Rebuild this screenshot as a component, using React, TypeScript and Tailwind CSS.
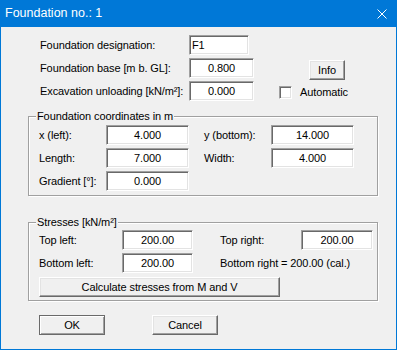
import React from "react";

const font = { fontFamily: '"Liberation Sans", Arial, sans-serif' };

function Field({ value, w, align = "center" }: { value: string; w: string; align?: "center" | "left" }) {
  return (
    <div
      className={`${w} h-[20px] bg-white border border-t-[#a0a0a0] border-l-[#a0a0a0] border-r-white border-b-white shadow-[inset_1px_1px_0_#696969,inset_-1px_-1px_0_#e3e3e3] flex items-center ${
        align === "center" ? "justify-center" : "justify-start pl-[2px]"
      } text-[11px] leading-none text-black`}
    >
      {value}
    </div>
  );
}

function Btn({ label, w, def = false }: { label: string; w: string; def?: boolean }) {
  return (
    <div
      className={`${w} h-[20px] flex items-center justify-center text-[11px] leading-none text-black ${
        def
          ? "border border-[#6a6a6a] shadow-[inset_1px_1px_0_#fff,inset_-1px_-1px_0_#a0a0a0]"
          : "border border-t-white border-l-white border-r-[#696969] border-b-[#696969] shadow-[inset_-1px_-1px_0_#a0a0a0,inset_1px_1px_0_#e3e3e3]"
      }`}
    >
      {label}
    </div>
  );
}

function Group({ title, children, className }: { title: string; children: React.ReactNode; className?: string }) {
  return (
    <div
      className={`w-[350px] border border-[#a0a0a0] shadow-[inset_1px_1px_0_#fff,1px_1px_0_#fff] flex flex-col ${className ?? ""}`}
    >
      <span className="-mt-[7px] ml-[7px] px-[1px] w-fit bg-[#f0f0f0] text-[11px] leading-[13px] text-black">{title}</span>
      {children}
    </div>
  );
}

export default function App() {
  return (
    <div
      className="w-[397px] h-[350px] bg-[#f0f0f0] border-x border-b border-[#0078d7] flex flex-col text-black"
      style={font}
    >
      <div className="h-[27px] shrink-0 bg-[#0078d7] flex items-center justify-between pl-[4px] pr-[9px]">
        <span className="text-white text-[12.5px] leading-none">Foundation no.: 1</span>
        <svg width="10" height="10" viewBox="0 0 10 10" className="block">
          <path d="M0.5 0.5 L9.5 9.5 M9.5 0.5 L0.5 9.5" stroke="#fff" strokeWidth="1" />
        </svg>
      </div>

      <div className="flex flex-col pl-[27px] pt-[8px] text-[11px] leading-[13px] tracking-[-0.1px]">
        {/* Top section */}
        <div className="flex pl-[12px]">
          <div className="grid grid-cols-[149px_auto] gap-y-[3px] items-center">
            <span>Foundation designation:</span>
            <Field value="F1" w="w-[60px]" align="left" />
            <span>Foundation base [m b. GL]:</span>
            <Field value="0.800" w="w-[65px]" />
            <span>Excavation unloading [kN/m²]:</span>
            <Field value="0.000" w="w-[65px]" />
          </div>
          <div className="flex flex-col ml-[25px]">
            <div className="ml-[30px] mt-[25px]">
              <Btn label="Info" w="w-[36px]" />
            </div>
            <div className="flex items-center mt-[6px] gap-[8px]">
              <div className="w-[13px] h-[13px] bg-white border border-t-[#a0a0a0] border-l-[#a0a0a0] border-r-white border-b-white shadow-[inset_1px_1px_0_#696969,inset_-1px_-1px_0_#e3e3e3]" />
              <span>Automatic</span>
            </div>
          </div>
        </div>

        {/* Group 1 */}
        <Group title="Foundation coordinates in m" className="mt-[15px] pb-[4px]">
          <div className="grid grid-cols-[67px_83px_15px_67px_83px] gap-y-[3px] items-center pl-[10px] mt-[2px]">
            <span>x (left):</span>
            <Field value="4.000" w="w-[83px]" />
            <span />
            <span>y (bottom):</span>
            <Field value="14.000" w="w-[83px]" />
            <span>Length:</span>
            <Field value="7.000" w="w-[83px]" />
            <span />
            <span>Width:</span>
            <Field value="4.000" w="w-[83px]" />
            <span>Gradient [°]:</span>
            <Field value="0.000" w="w-[83px]" />
          </div>
        </Group>

        {/* Group 2 */}
        <Group title="Stresses [kN/m²]" className="mt-[26px] pb-[3px]">
          <div className="flex flex-col pl-[10px] mt-[1px]">
            <div className="grid grid-cols-[83px_71px_27px_81px_72px] gap-y-[3px] items-center">
              <span>Top left:</span>
              <Field value="200.00" w="w-[71px]" />
              <span />
              <span>Top right:</span>
              <Field value="200.00" w="w-[72px]" />
              <span>Bottom left:</span>
              <Field value="200.00" w="w-[71px]" />
              <span />
              <span className="col-span-2 whitespace-nowrap">Bottom right = 200.00 (cal.)</span>
            </div>
            <div className="mt-[4px]">
              <Btn label="Calculate stresses from M and V" w="w-[241px]" />
            </div>
          </div>
        </Group>

        {/* Bottom buttons */}
        <div className="flex mt-[14px] ml-[11px] gap-[47px]">
          <Btn label="OK" w="w-[66px]" def />
          <Btn label="Cancel" w="w-[66px]" />
        </div>
      </div>
    </div>
  );
}
